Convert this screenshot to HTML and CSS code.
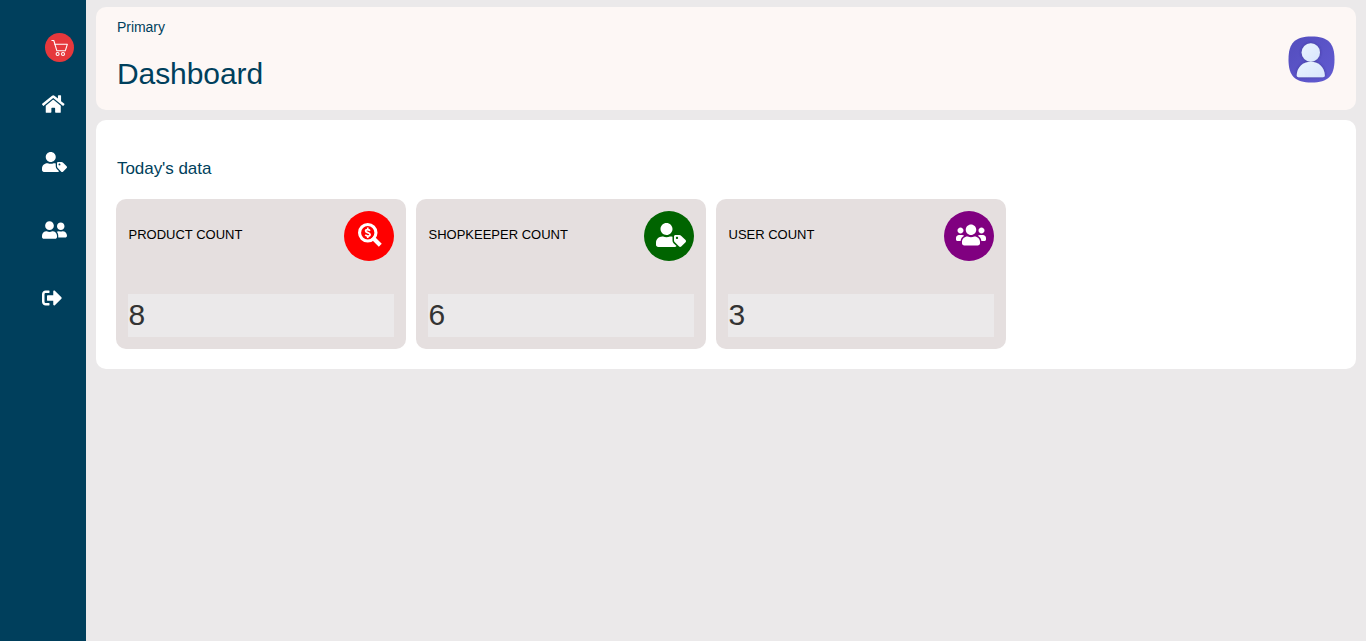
FILE: index.html
```html
<!DOCTYPE html>
<html lang="en">
<head>
<meta charset="utf-8">
<title>Dashboard</title>
<link rel="stylesheet" href="styles.css">
</head>
<body>
<aside class="sidebar">
  <svg class="logo" viewBox="0 0 29 29"><circle cx="14.5" cy="14.5" r="14.5" fill="#e6383c"/><g fill="none" stroke="#fff" stroke-width="1.1" stroke-linecap="round" stroke-linejoin="round"><path d="M6.900 7.500h1.900l3 10.200h8.600M9.600 11.300h12.700l-1.700 5.500"/><circle cx="12.600" cy="21" r="1.500"/><circle cx="18" cy="21" r="1.500"/></g></svg>
  <nav class="menu">
    <svg class="menu-icon home" viewBox="0 0 576 512"><path d="M280.37 148.26L96 300.11V464a16 16 0 0 0 16 16l112.06-.29a16 16 0 0 0 15.92-16V368a16 16 0 0 1 16-16h64a16 16 0 0 1 16 16v95.64a16 16 0 0 0 16 16.05L464 480a16 16 0 0 0 16-16V300L295.67 148.26a12.19 12.19 0 0 0-15.3 0zM571.6 251.47L488 182.56V44.05a12 12 0 0 0-12-12h-56a12 12 0 0 0-12 12v72.61L318.47 43a48 48 0 0 0-61 0L4.34 251.47a12 12 0 0 0-1.6 16.9l25.5 31A12 12 0 0 0 45.15 301l235.22-193.74a12.19 12.19 0 0 1 15.3 0L530.9 301a12 12 0 0 0 16.9-1.6l25.5-31a12 12 0 0 0-1.7-16.93z"/></svg>
    <svg class="menu-icon shopkeeper" viewBox="0 0 640 512"><path d="M630.6 364.9l-90.3-90.2c-12-12-28.3-18.7-45.3-18.7h-79.3c-17.7 0-32 14.3-32 32v79.2c0 17 6.7 33.2 18.7 45.2l90.3 90.2c12.5 12.5 32.8 12.5 45.3 0l92.5-92.5c12.6-12.5 12.6-32.7.1-45.2zm-182.8-21c-13.3 0-24-10.7-24-24s10.7-24 24-24 24 10.7 24 24c0 13.2-10.7 24-24 24zm-223.8-88c70.7 0 128-57.3 128-128C352 57.3 294.7 0 224 0S96 57.3 96 128c0 70.6 57.3 127.9 128 127.9zm127.8 111.2V294c-12.2-3.6-24.9-6.2-38.2-6.2h-16.7c-22.2 10.2-46.9 16-72.9 16s-50.6-5.8-72.9-16h-16.7C60.2 287.9 0 348.1 0 422.3v41.6c0 26.5 21.5 48 48 48h352c15.5 0 29.1-7.5 37.9-18.9l-58-58c-18.1-18.1-28.1-42.2-28.1-67.9z"/></svg>
    <svg class="menu-icon friends" viewBox="0 0 640 512"><path d="M192 256c61.9 0 112-50.1 112-112S253.9 32 192 32 80 82.1 80 144s50.1 112 112 112zm76.8 32h-8.3c-20.8 10-43.9 16-68.5 16s-47.6-6-68.5-16h-8.3C51.6 288 0 339.6 0 403.2V432c0 26.5 21.5 48 48 48h288c26.5 0 48-21.5 48-48v-28.8c0-63.6-51.6-115.2-115.2-115.2zM480 256c53 0 96-43 96-96s-43-96-96-96-96 43-96 96 43 96 96 96zm48 32h-3.8c-13.9 4.8-28.6 8-44.2 8s-30.3-3.2-44.2-8H432c-20.4 0-39.2 5.9-55.7 15.4 24.4 26.3 39.7 61.2 39.7 99.8v38.4c0 2.2-.5 4.3-.6 6.4H592c26.5 0 48-21.5 48-48 0-61.9-50.1-112-112-112z"/></svg>
    <svg class="menu-icon logout" viewBox="0 0 512 512"><path d="M497 273L329 441c-15 15-41 4.5-41-17v-96H152c-13.3 0-24-10.7-24-24v-96c0-13.3 10.7-24 24-24h136V88c0-21.4 25.9-32 41-17l168 168c9.3 9.4 9.3 24.6 0 34zM192 436v-40c0-6.6-5.4-12-12-12H96c-17.7 0-32-14.3-32-32V160c0-17.7 14.3-32 32-32h84c6.6 0 12-5.4 12-12V76c0-6.6-5.4-12-12-12H96c-53 0-96 43-96 96v192c0 53 43 96 96 96h84c6.6 0 12-5.4 12-12z"/></svg>
  </nav>
</aside>
<div class="content">
  <header class="header">
    <div class="heading">
      <span class="eyebrow">Primary</span>
      <h1 class="title">Dashboard</h1>
    </div>
    <svg class="avatar" viewBox="0 0 47 47">
      <defs>
        <linearGradient id="bg" x1="0" y1="0" x2="1" y2="1"><stop offset="0" stop-color="#534dbd"/><stop offset="1" stop-color="#625bd2"/></linearGradient>
        <linearGradient id="fig" x1="0" y1="0" x2="1" y2="1"><stop offset="0" stop-color="#e9f4ff"/><stop offset="1" stop-color="#d8e5fc"/></linearGradient>
        <filter id="shade" x="-20%" y="-20%" width="140%" height="140%"><feDropShadow dx="0" dy="0" stdDeviation="1.5" flood-color="#2d2a83" flood-opacity=".7"/></filter>
      </defs>
      <path d="M23.500 .5C40 .5 46.500 7 46.500 23.500S40 46.500 23.500 46.500 .5 40 .5 23.500 7 .5 23.500 .5Z" fill="url(#bg)"/>
      <g fill="url(#fig)" filter="url(#shade)"><circle cx="22.800" cy="16.500" r="9.200"/><path d="M8.700 39.500C9 31 15 25.800 22.800 25.800S36.600 31 36.900 39.500Q37 41.200 35 41.200H10.600Q8.600 41.200 8.700 39.500Z"/></g>
    </svg>
  </header>
  <main class="panel">
    <h2 class="panel-title">Today's data</h2>
    <div class="cards">
      <section class="card">
        <div class="card-top">
          <span class="label">PRODUCT COUNT</span>
          <span class="badge red"><svg class="badge-icon square" viewBox="0 0 24 24"><g fill="none" stroke="#fff"><circle cx="9.750" cy="9.750" r="8.200" stroke-width="3.100"/><path d="M16 16l4.800 4.800" stroke-width="4.200" stroke-linecap="square" stroke-linejoin="round"/><path d="M12 7.700C11 6.300 7.600 6.100 7.600 8S12.100 9.400 12.100 11.500 8.500 13.400 7.300 11.800M9.750 4.500v2M9.750 13v2" stroke-width="1.700"/></g></svg></span>
        </div>
        <div class="value">8</div>
      </section>
      <section class="card">
        <div class="card-top">
          <span class="label">SHOPKEEPER COUNT</span>
          <span class="badge green"><svg class="badge-icon wide" viewBox="0 0 640 512"><path d="M630.6 364.9l-90.3-90.2c-12-12-28.3-18.7-45.3-18.7h-79.3c-17.7 0-32 14.3-32 32v79.2c0 17 6.7 33.2 18.7 45.2l90.3 90.2c12.5 12.5 32.8 12.5 45.3 0l92.5-92.5c12.6-12.5 12.6-32.7.1-45.2zm-182.8-21c-13.3 0-24-10.7-24-24s10.7-24 24-24 24 10.7 24 24c0 13.2-10.7 24-24 24zm-223.8-88c70.7 0 128-57.3 128-128C352 57.3 294.7 0 224 0S96 57.3 96 128c0 70.6 57.3 127.9 128 127.9zm127.8 111.2V294c-12.2-3.6-24.9-6.2-38.2-6.2h-16.7c-22.2 10.2-46.9 16-72.9 16s-50.6-5.8-72.9-16h-16.7C60.2 287.9 0 348.1 0 422.3v41.6c0 26.5 21.5 48 48 48h352c15.5 0 29.1-7.5 37.9-18.9l-58-58c-18.1-18.1-28.1-42.2-28.1-67.9z"/></svg></span>
        </div>
        <div class="value">6</div>
      </section>
      <section class="card">
        <div class="card-top">
          <span class="label">USER COUNT</span>
          <span class="badge purple"><svg class="badge-icon wide" viewBox="0 0 640 512"><path d="M96 224c35.3 0 64-28.7 64-64s-28.7-64-64-64-64 28.7-64 64 28.7 64 64 64zm448 0c35.3 0 64-28.7 64-64s-28.7-64-64-64-64 28.7-64 64 28.7 64 64 64zm32 32h-64c-17.6 0-33.5 7.1-45.1 18.6 40.3 22.1 68.9 62 75.1 109.4h66c17.7 0 32-14.3 32-32v-32c0-35.3-28.7-64-64-64zm-256 0c61.9 0 112-50.1 112-112S381.9 32 320 32 208 82.1 208 144s50.1 112 112 112zm76.8 32h-8.3c-20.8 10-43.9 16-68.5 16s-47.6-6-68.5-16h-8.3C179.6 288 128 339.6 128 403.2V432c0 26.5 21.5 48 48 48h288c26.5 0 48-21.5 48-48v-28.8c0-63.6-51.6-115.2-115.2-115.2zm-223.7-13.4C161.5 263.1 145.6 256 128 256H64c-35.3 0-64 28.7-64 64v32c0 17.7 14.3 32 32 32h65.9c6.3-47.4 34.9-87.3 75.2-109.4z"/></svg></span>
        </div>
        <div class="value">3</div>
      </section>
    </div>
  </main>
</div>
</body>
</html>
```
FILE: styles.css
```css
* { box-sizing: border-box; }
body { margin: 0; display: flex; height: 100vh; overflow: hidden; background: #ebe9ea; font-family: "Liberation Sans", Arial, sans-serif; }
svg { display: block; flex: none; }
.sidebar { width: 86px; flex: none; background: #003f5c; padding: 33px 0 0 42px; }
.logo { width: 29px; height: 29px; margin-left: 3px; }
.menu { display: flex; flex-direction: column; align-items: flex-start; margin-top: 32px; }
.menu-icon { height: 20px; fill: #fff; }
.home { width: 22.5px; }
.shopkeeper { width: 25px; margin-top: 38px; }
.friends { width: 25px; margin-top: 48px; }
.logout { width: 20px; margin-top: 48px; }
.content { flex: 1; padding: 7px 10px 0; }
.header { height: 103px; padding: 1px 21px 0; border-radius: 10px; background: #fdf7f5; color: #003f5c; display: flex; justify-content: space-between; align-items: center; }
.heading { align-self: flex-start; padding-top: 11px; }
.eyebrow { display: block; font-size: 14px; line-height: 16px; letter-spacing: -.05px; }
.title { margin: 22px 0 0; font-size: 30px; line-height: 34px; font-weight: 400; letter-spacing: -.08px; }
.avatar { width: 47px; height: 47px; }
.panel { margin-top: 10px; height: 249px; padding: 39px 20px 20px; border-radius: 10px; background: #fff; }
.panel-title { margin: 0 0 20px 1px; color: #003f5c; font-size: 17px; line-height: 20px; font-weight: 400; letter-spacing: -.05px; }
.cards { display: flex; gap: 10px; }
.card { width: 290px; height: 150px; padding: 12px; border-radius: 10px; background: #e5dfdf; display: flex; flex-direction: column; justify-content: space-between; }
.card-top { display: flex; justify-content: space-between; }
.label { padding: 16px 0 0 .5px; font-size: 13px; line-height: 16px; color: #000; }
.badge { width: 50px; height: 50px; border-radius: 50%; padding-top: 12px; }
.badge-icon { height: 24px; fill: #fff; }
.square { width: 24px; margin-left: 14px; }
.wide { width: 30px; margin-left: 12px; }
.red { background: #f00; }
.green { background: #006400; }
.purple { background: #800080; }
.value { height: 43px; padding: 4px 0 0 .5px; background: #ebe9ea; color: #333; font-size: 30px; line-height: 34px; }
```
